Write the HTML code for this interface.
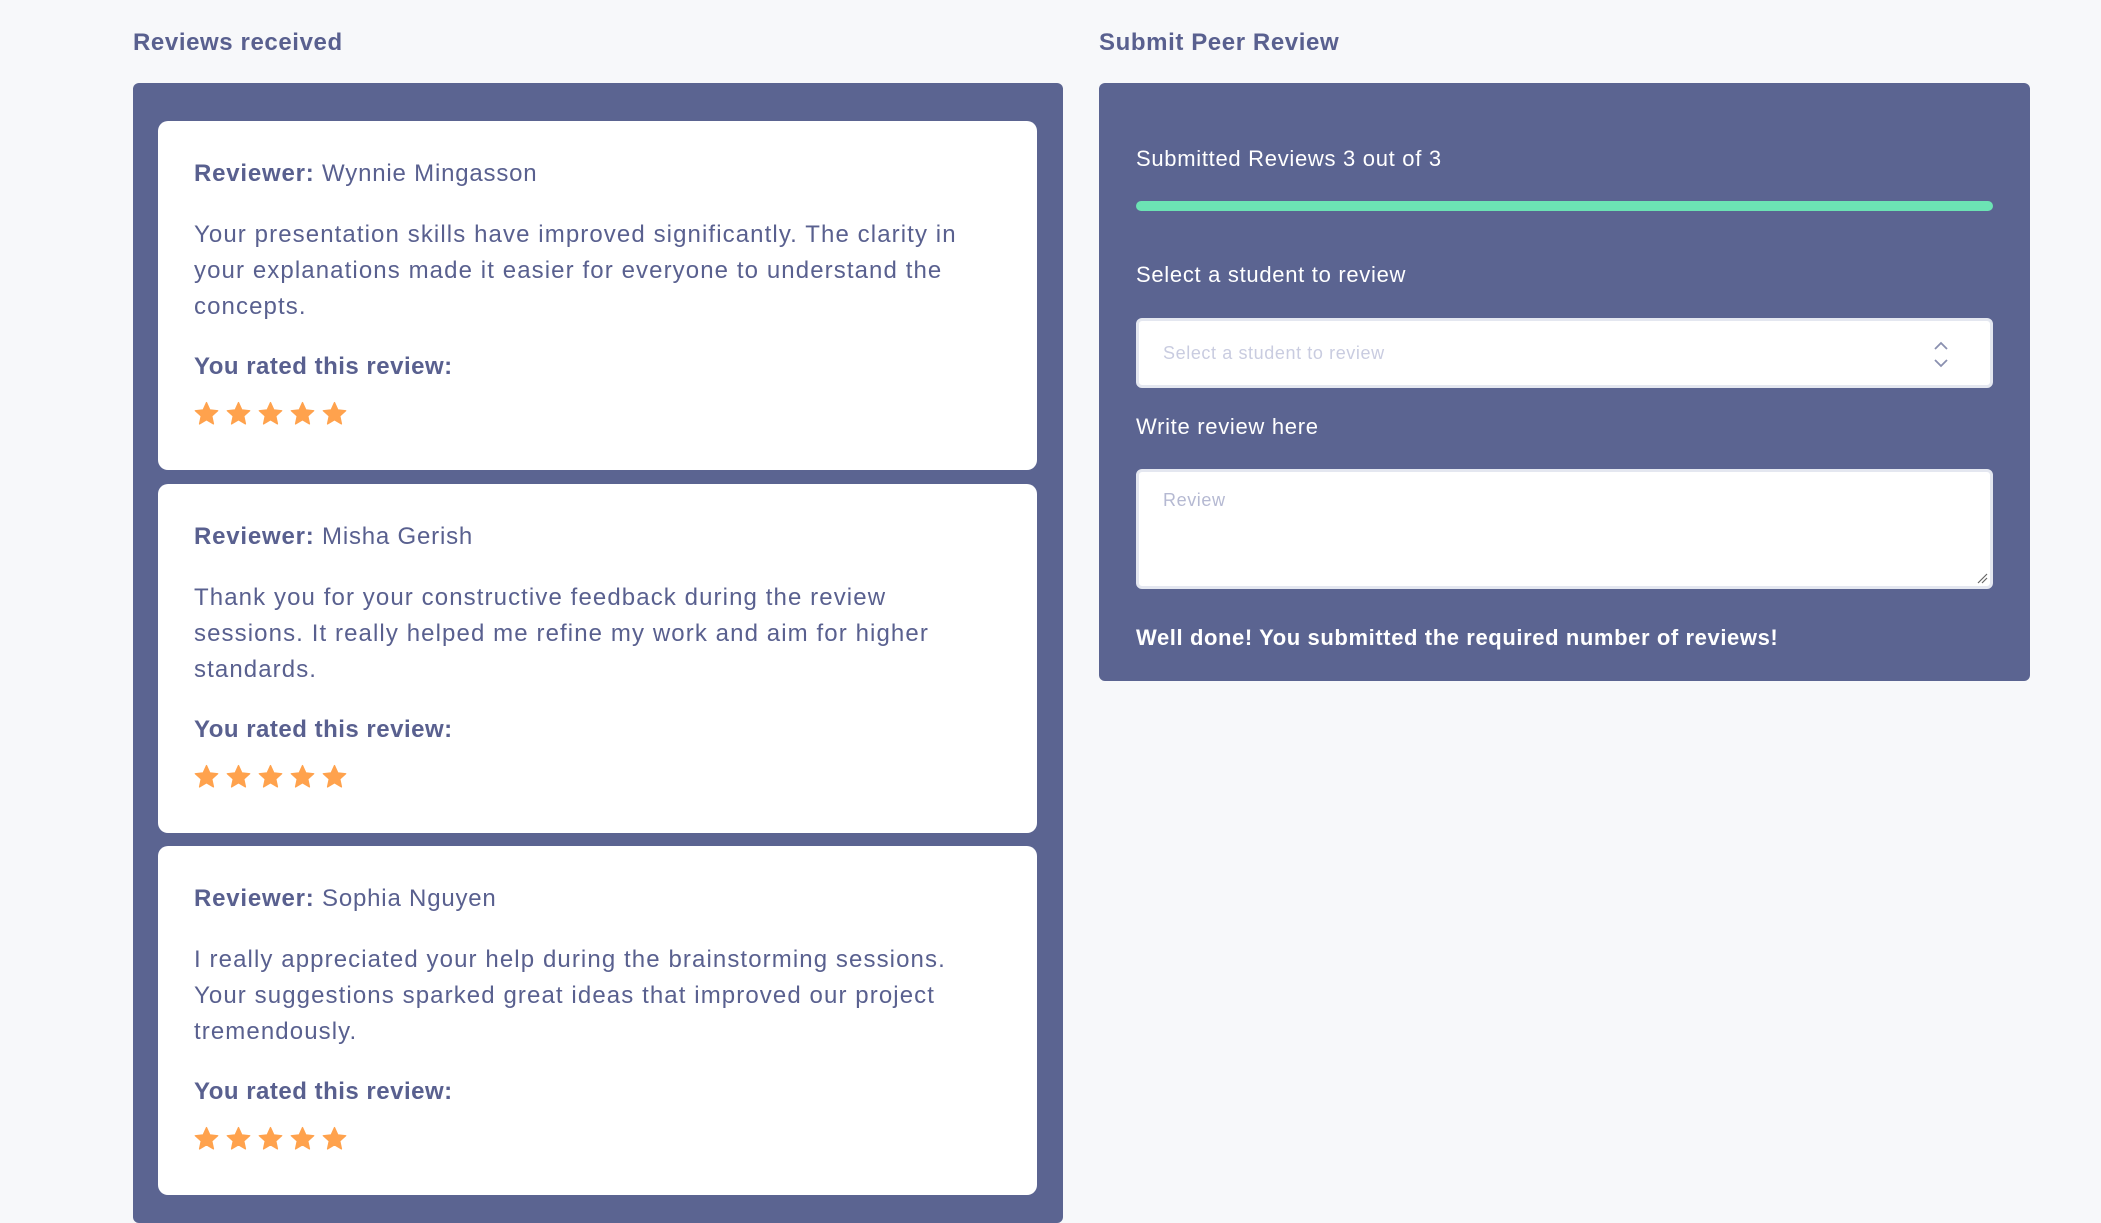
<!DOCTYPE html>
<html><head><meta charset="utf-8"><style>
*{box-sizing:border-box;margin:0;padding:0}
body{width:2101px;height:1213px;background:#f7f8fa;font-family:"Liberation Sans",sans-serif;color:#59608f;position:relative;overflow:hidden;letter-spacing:0.6px}
.h{position:absolute;top:29px;font-size:24px;font-weight:bold;color:#59608f}
.panel{position:absolute;background:#5b6491;border-radius:6px}
.card{position:absolute;left:158px;width:879px;height:349px;background:#fff;border-radius:10px;padding:0 36px}
.rv{position:absolute;left:36px;top:39px;font-size:24px;letter-spacing:0.8px}
.body{position:absolute;left:36px;top:96px;width:790px;font-size:24px;line-height:36px;letter-spacing:1.1px}
.rt{position:absolute;left:36px;top:232px;font-size:24px;font-weight:bold;letter-spacing:0.5px}
.stars{position:absolute;left:36px;top:280px;display:flex;gap:7px}
.w{color:#fff;position:absolute;left:1136px;font-size:22px;letter-spacing:0.7px}
.box{position:absolute;left:1136px;width:857px;background:#fff;border:3px solid #e4e7f0;border-radius:6px}
</style></head><body>
<div class="h" style="left:133px">Reviews received</div>
<div class="h" style="left:1099px">Submit Peer Review</div>
<div class="panel" style="left:133px;top:83px;width:930px;height:1140px"></div>

<div class="card" style="top:121px">
<div class="rv"><b>Reviewer:</b> Wynnie Mingasson</div>
<div class="body">Your presentation skills have improved significantly. The clarity in your explanations made it easier for everyone to understand the concepts.</div>
<div class="rt">You rated this review:</div>
<div class="stars">S</div></div>
<div class="card" style="top:484px">
<div class="rv"><b>Reviewer:</b> Misha Gerish</div>
<div class="body">Thank you for your constructive feedback during the review sessions. It really helped me refine my work and aim for higher standards.</div>
<div class="rt">You rated this review:</div>
<div class="stars">S</div></div>
<div class="card" style="top:846px">
<div class="rv"><b>Reviewer:</b> Sophia Nguyen</div>
<div class="body">I really appreciated your help during the brainstorming sessions. Your suggestions sparked great ideas that improved our project tremendously.</div>
<div class="rt">You rated this review:</div>
<div class="stars">S</div></div>

<div class="panel" style="left:1099px;top:83px;width:931px;height:598px"></div>
<div class="w" style="top:146px">Submitted Reviews 3 out of 3</div>
<div style="position:absolute;left:1136px;top:201px;width:857px;height:10px;border-radius:5px;background:#6ce3b4"></div>
<div class="w" style="top:262px">Select a student to review</div>
<div class="box" style="top:318px;height:70px"><span style="position:absolute;left:24px;top:22px;font-size:18px;color:#c9cce0">Select a student to review</span>
<svg style="position:absolute;right:40px;top:18px" width="18" height="32" viewBox="0 0 18 32" fill="none" stroke="#8a90b0" stroke-width="1.8"><path d="M3 10l6-6 6 6M3 21l6 6 6-6"/></svg></div>
<div class="w" style="top:414px">Write review here</div>
<div class="box" style="top:469px;height:120px"><span style="position:absolute;left:24px;top:18px;font-size:18px;color:#b5b9d2">Review</span>
<svg style="position:absolute;right:2px;bottom:2px" width="12" height="12" stroke="#666" stroke-width="1.2"><path d="M2 11L11 2M6 11L11 6"/></svg></div>
<div class="w" style="top:625px;font-weight:bold;letter-spacing:0.6px">Well done! You submitted the required number of reviews!</div>
<script>
document.querySelectorAll('.stars').forEach(s=>{s.innerHTML='<svg width="25" height="25" viewBox="0 0 24 24"><path fill="#ffa24d" stroke="#ffa24d" stroke-width="1.2" stroke-linejoin="round" d="M12 1.5l3.2 7 7.6.8-5.7 5.1 1.6 7.6L12 18.1 5.3 22l1.6-7.6L1.2 9.3l7.6-.8z"/></svg>'.repeat(5)});
</script>
</body></html>
